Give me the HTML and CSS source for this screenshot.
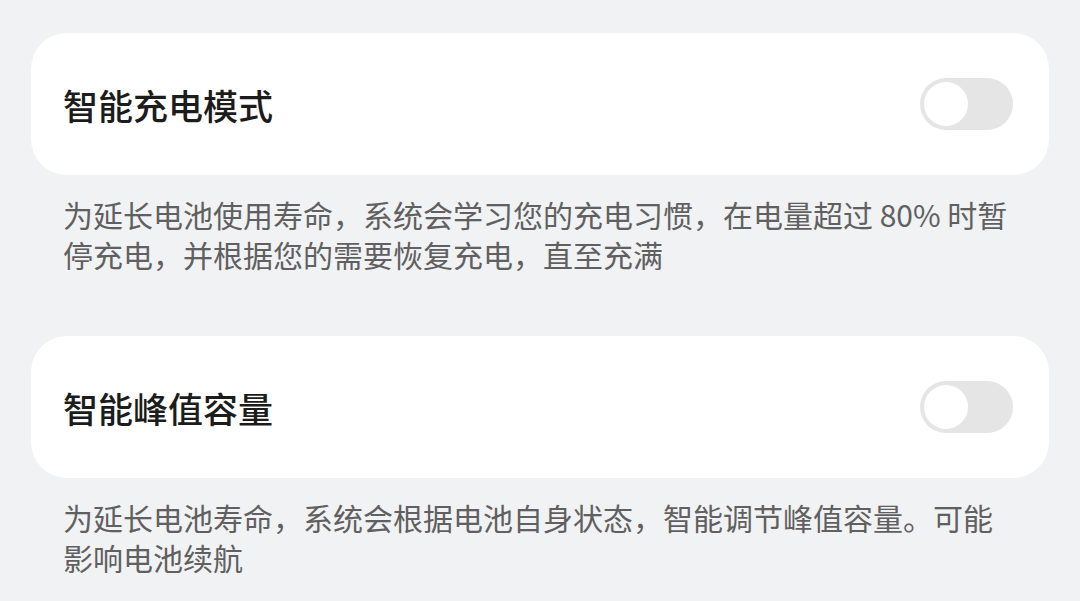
FILE: index.html
```html
<!DOCTYPE html>
<html lang="zh-CN">
<head>
  <meta charset="UTF-8" />
  <meta name="viewport" content="width=device-width, initial-scale=1.0" />
  <title>电池设置</title>
  <link rel="stylesheet" href="styles.css">
</head>
<body>

  <div class="group">
    <div class="card">
      <span class="title">智能充电模式</span>
      <div class="switch"><div class="knob"></div></div>
    </div>
    <p class="desc">为延长电池使用寿命，系统会学习您的充电习惯，在电量超过 80% 时暂停充电，并根据您的需要恢复充电，直至充满</p>
  </div>

  <div class="group">
    <div class="card">
      <span class="title">智能峰值容量</span>
      <div class="switch"><div class="knob"></div></div>
    </div>
    <p class="desc">为延长电池寿命，系统会根据电池自身状态，智能调节峰值容量。可能影响电池续航</p>
  </div>

</body>
</html>
```

FILE: styles.css
```css
body {
  font-family: "Noto Sans CJK SC", "Noto Sans", sans-serif;
  background: #f1f2f4;
  margin: 0;
  padding: 33px 31px 0;
}
.group {
  margin-bottom: 62px;
}
.group:last-child {
  margin-bottom: 0;
}
.card {
  display: flex;
  align-items: center;
  justify-content: space-between;
  height: 142px;
  padding: 0 36px 0 32px;
  background: #fff;
  border-radius: 36px;
}
.title {
  font-size: 35px;
  font-weight: 500;
  color: #1c1c1c;
}
.switch {
  width: 93px;
  height: 52px;
  border-radius: 26px;
  background: #e5e5e6;
  padding: 4px;
  box-sizing: border-box;
}
.knob {
  width: 44px;
  height: 44px;
  border-radius: 50%;
  background: #fff;
}
.desc {
  margin: 0;
  padding: 19px 32px 0;
  font-size: 30px;
  line-height: 40px;
  color: #606060;
}
```
